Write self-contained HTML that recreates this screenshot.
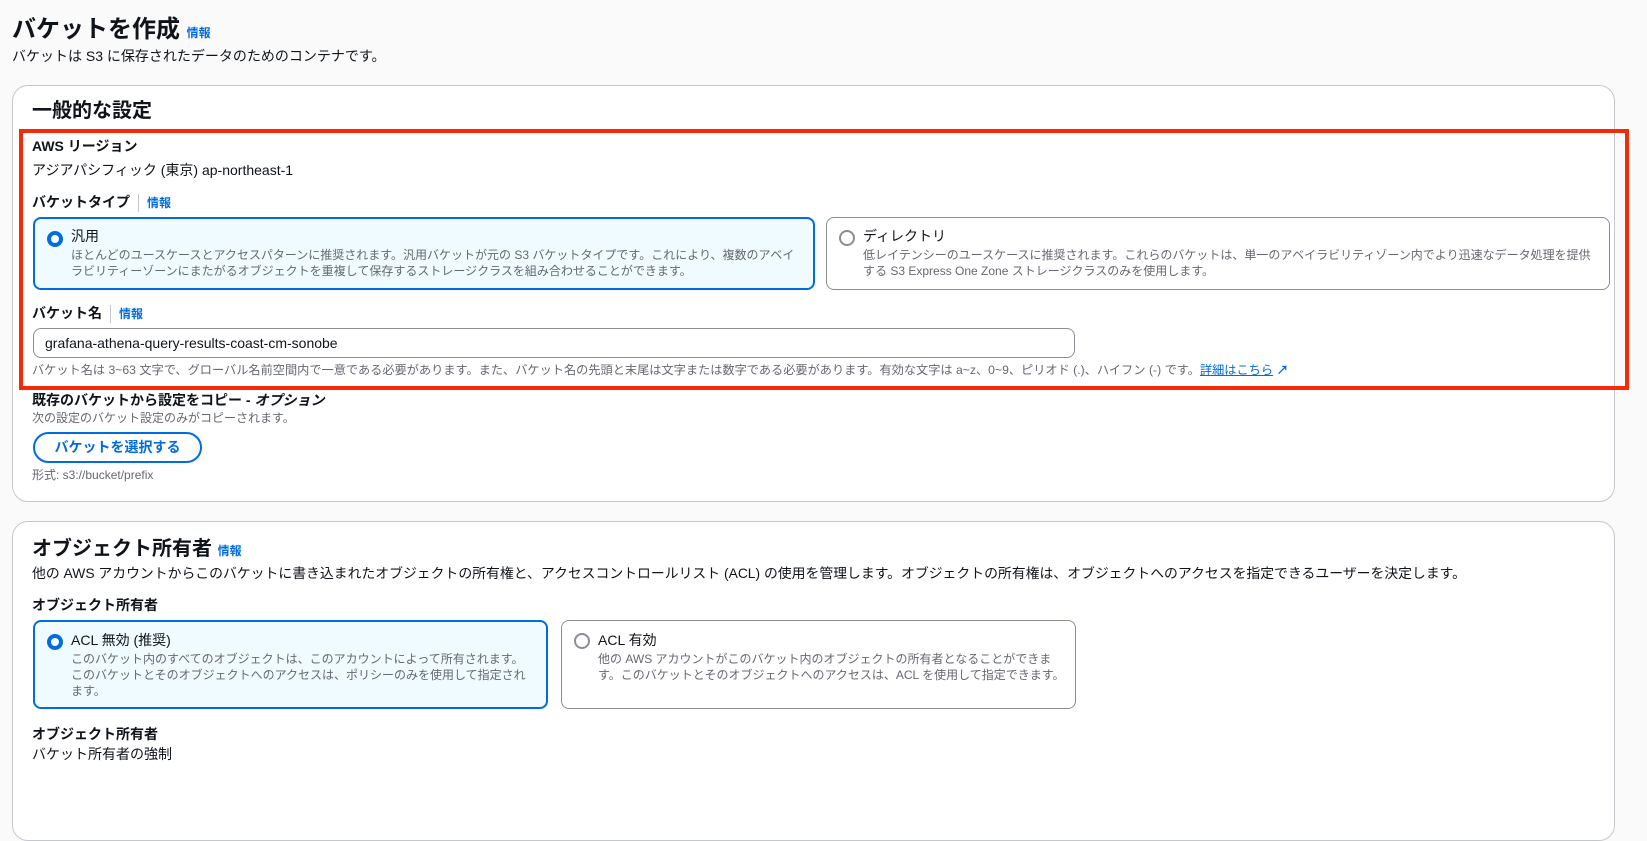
<!DOCTYPE html>
<html><head><meta charset="utf-8"><style>
*{box-sizing:border-box;margin:0;padding:0}
body{width:1647px;height:783px;overflow:hidden;background:#fafafa;font-family:"Liberation Sans","Noto Sans CJK JP",sans-serif;color:#0f141a;position:relative;font-size:14px}
.a{position:absolute;white-space:nowrap}
.link{color:#006ce0;font-weight:bold;font-size:12px}
.panel{position:absolute;background:#fff;border:1px solid #c6c6cd;border-radius:16px}
.b{font-weight:bold}
.sec{color:#656871;font-size:12px;line-height:16px}
.card{position:absolute;border:1px solid #8c8c94;border-radius:8px;background:#fff}
.card.sel{border:2px solid #006ce0;background:#f0fbff}
.radio{position:absolute;left:12px;top:12px;width:16px;height:16px;border-radius:50%;border:2px solid #8c8c94;background:#fff}
.sel .radio{border:4px solid #006ce0}
.sep{display:inline-block;width:1px;height:18px;background:#c6c6cd;vertical-align:middle;margin:0 8px}
</style></head><body>
<div class="a b" style="left:12px;top:14px;font-size:24px;line-height:32px">バケットを作成 <span class="link" style="font-size:12px">情報</span></div>
<div class="a" style="left:12px;top:46px;font-size:14px;line-height:20px">バケットは S3 に保存されたデータのためのコンテナです。</div>

<div class="panel" style="left:12px;top:85px;width:1603px;height:417px"></div>
<div class="a b" style="left:32px;top:98px;font-size:20px;line-height:26px">一般的な設定</div>
<div style="position:absolute;left:19px;top:129px;width:1610px;height:261px;border:4px solid #f52a0a"></div>
<div class="a b" style="left:32px;top:137px;line-height:18px">AWS リージョン</div>
<div class="a" style="left:32px;top:161px;line-height:18px">アジアパシフィック (東京) ap-northeast-1</div>
<div class="a b" style="left:32px;top:193px;line-height:18px">バケットタイプ<span class="sep"></span><span class="link">情報</span></div>
<div class="card sel" style="left:33px;top:217px;width:782px;height:73px"><div class="radio"></div>
<div class="a" style="left:36px;top:8px;line-height:18px">汎用</div>
<div class="a sec" style="left:36px;top:28px">ほとんどのユースケースとアクセスパターンに推奨されます。汎用バケットが元の S3 バケットタイプです。これにより、複数のアベイ<br>ラビリティーゾーンにまたがるオブジェクトを重複して保存するストレージクラスを組み合わせることができます。</div></div>
<div class="card" style="left:826px;top:217px;width:784px;height:73px"><div class="radio"></div>
<div class="a" style="left:36px;top:9px;line-height:18px">ディレクトリ</div>
<div class="a sec" style="left:36px;top:29px">低レイテンシーのユースケースに推奨されます。これらのバケットは、単一のアベイラビリティゾーン内でより迅速なデータ処理を提供<br>する S3 Express One Zone ストレージクラスのみを使用します。</div></div>
<div class="a b" style="left:32px;top:304px;line-height:18px">バケット名<span class="sep"></span><span class="link">情報</span></div>
<div style="position:absolute;left:33px;top:328px;width:1042px;height:30px;border:1px solid #8c8c94;border-radius:8px;background:#fff"></div>
<div class="a" style="left:45px;top:334px;line-height:18px">grafana-athena-query-results-coast-cm-sonobe</div>
<div class="a sec" style="left:32px;top:362px;font-size:12.2px">バケット名は 3~63 文字で、グローバル名前空間内で一意である必要があります。また、バケット名の先頭と末尾は文字または数字である必要があります。有効な文字は a~z、0~9、ピリオド (.)、ハイフン (-) です。<span style="color:#006ce0;text-decoration:underline">詳細はこちら</span> <span style="color:#006ce0;font-weight:bold">↗</span></div>
<div class="a b" style="left:32px;top:391px;line-height:18px">既存のバケットから設定をコピー - <i>オプション</i></div>
<div class="a sec" style="left:32px;top:410px">次の設定のバケット設定のみがコピーされます。</div>
<div style="position:absolute;left:33px;top:432px;width:169px;height:31px;border:2px solid #006ce0;border-radius:16px;color:#006ce0;font-weight:bold;text-align:center;line-height:27px">バケットを選択する</div>
<div class="a sec" style="left:32px;top:467px">形式: s3://bucket/prefix</div>

<div class="panel" style="left:12px;top:521px;width:1603px;height:320px"></div>
<div class="a b" style="left:32px;top:536px;font-size:20px;line-height:26px">オブジェクト所有者 <span class="link">情報</span></div>
<div class="a" style="left:32px;top:564px;line-height:18px;font-size:13.85px">他の AWS アカウントからこのバケットに書き込まれたオブジェクトの所有権と、アクセスコントロールリスト (ACL) の使用を管理します。オブジェクトの所有権は、オブジェクトへのアクセスを指定できるユーザーを決定します。</div>
<div class="a b" style="left:32px;top:596px;line-height:18px">オブジェクト所有者</div>
<div class="card sel" style="left:33px;top:620px;width:515px;height:89px"><div class="radio"></div>
<div class="a" style="left:36px;top:9px;line-height:18px">ACL 無効 (推奨)</div>
<div class="a sec" style="left:36px;top:29px">このバケット内のすべてのオブジェクトは、このアカウントによって所有されます。<br>このバケットとそのオブジェクトへのアクセスは、ポリシーのみを使用して指定され<br>ます。</div></div>
<div class="card" style="left:561px;top:620px;width:515px;height:89px"><div class="radio"></div>
<div class="a" style="left:36px;top:10px;line-height:18px">ACL 有効</div>
<div class="a sec" style="left:36px;top:30px">他の AWS アカウントがこのバケット内のオブジェクトの所有者となることができま<br>す。このバケットとそのオブジェクトへのアクセスは、ACL を使用して指定できます。</div></div>
<div class="a b" style="left:32px;top:725px;line-height:18px">オブジェクト所有者</div>
<div class="a" style="left:32px;top:745px;line-height:18px">バケット所有者の強制</div>
</body></html>
